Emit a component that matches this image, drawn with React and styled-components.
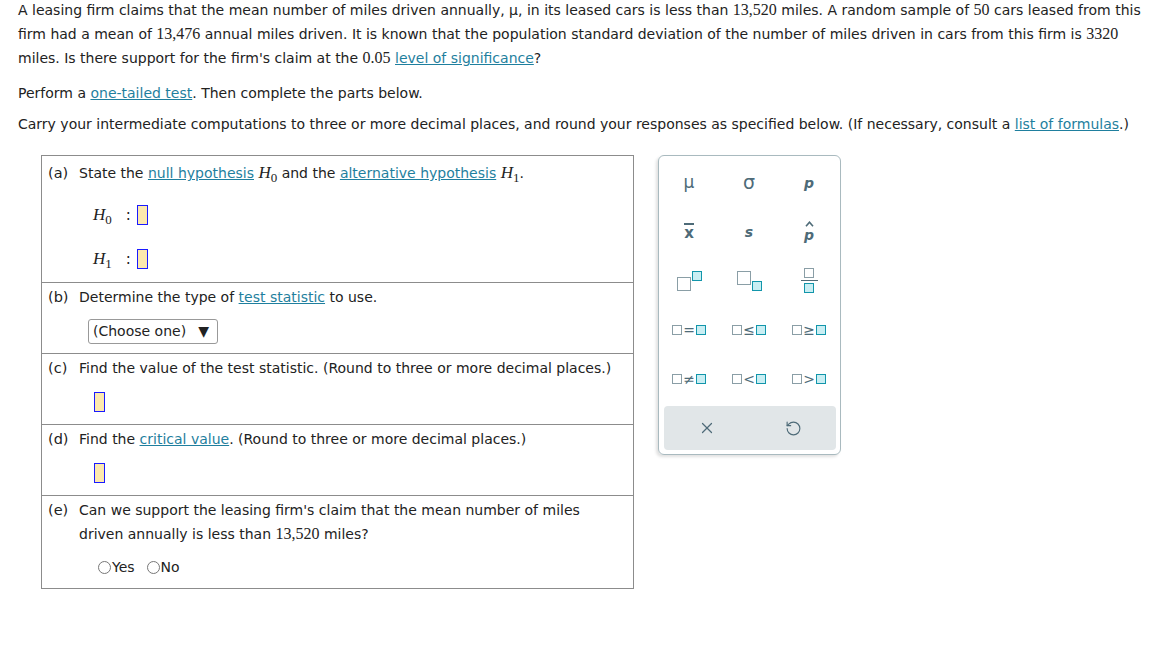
import styled, { createGlobalStyle } from 'styled-components'
import { X, RotateCcw } from 'lucide-react'

const GlobalStyle = createGlobalStyle`
  body {
    margin: 0;
    background: #fff;
    font-family: "DejaVu Sans", Verdana, sans-serif;
    font-size: 14px;
    color: #222;
  }
`

const Page = styled.div`
  padding: 0 0 0 18px;
`

const Para = styled.p`
  margin: ${(p) => p.$top}px 0 0;
  line-height: 24px;
  white-space: ${(p) => (p.$nowrap ? 'nowrap' : 'normal')};
`

const Num = styled.span`
  font-family: "Liberation Serif", "Times New Roman", serif;
  font-size: 16px;
`

const Link = styled.a`
  color: #1f7f9e;
  text-decoration: underline;
  cursor: pointer;
`

const MathH = styled.span`
  font-family: "Liberation Serif", "Times New Roman", serif;
  font-style: italic;
  font-size: 17px;
`

const Sub = styled.sub`
  font-family: "Liberation Serif", "Times New Roman", serif;
  font-style: normal;
  font-size: 13px;
  vertical-align: -4px;
  line-height: 0;
`

const Workspace = styled.div`
  display: flex;
  align-items: flex-start;
  gap: 24px;
  margin: 19px 0 0 23px;
`

const Table = styled.div`
  width: 593px;
  box-sizing: border-box;
  border: 1px solid #8c8c8c;
`

const Row = styled.div`
  display: grid;
  grid-template-columns: 31px 1fr;
  padding: ${(p) => p.$top}px 6px ${(p) => p.$bottom || 0}px;
  border-top: ${(p) => (p.$first ? 'none' : '1px solid #8c8c8c')};
`

const Label = styled.span`
  line-height: 24px;
  font-size: 14.5px;
`

const Body = styled.div`
  line-height: 24px;
`

const HypLine = styled.div`
  display: flex;
  align-items: center;
  height: 28px;
  margin: 16px 0 0 14px;
`

const Colon = styled.span`
  margin: 0 6px 0 14px;
  font-size: 15px;
`

const AnswerBox = styled.span`
  display: inline-block;
  width: 9px;
  height: 18px;
  background: #fde9ae;
  border: 1px solid #1a1aff;
`

const AnswerLine = styled.div`
  display: flex;
  align-items: center;
  gap: 12px;
  height: ${(p) => p.$h}px;
  padding-left: ${(p) => p.$indent}px;
`

const Select = styled.div`
  display: flex;
  align-items: center;
  gap: 12px;
  height: 25px;
  box-sizing: border-box;
  padding: 0 8px 0 4px;
  border: 1px solid #999;
  border-radius: 3px;
  font-size: 14px;
`

const Choice = styled.label`
  display: flex;
  align-items: center;
  gap: 1px;
`

const Radio = styled.span`
  display: inline-block;
  width: 11px;
  height: 11px;
  border: 1px solid #777;
  border-radius: 50%;
`

const Palette = styled.div`
  width: 183px;
  height: 300px;
  box-sizing: border-box;
  border: 1px solid #a9babf;
  border-radius: 6px;
  box-shadow: -2px 2px 3px rgba(0, 0, 0, 0.12);
  padding-top: 2px;
  display: flex;
  flex-direction: column;
`

const KeyGrid = styled.div`
  display: grid;
  grid-template-columns: repeat(3, 60px);
  grid-auto-rows: 49px;
`

const Key = styled.div`
  display: flex;
  align-items: center;
  justify-content: center;
  color: #4e6b78;
  font-family: "DejaVu Sans", sans-serif;
`

const Glyph = styled.span`
  font-size: ${(p) => p.$size}px;
  font-style: ${(p) => (p.$italic ? 'italic' : 'normal')};
  font-weight: ${(p) => (p.$bold ? 700 : 400)};
  line-height: 1;
`

const Bar = styled.span`
  display: inline-block;
  border-top: 2px solid #4e6b78;
  padding-top: 1px;
  font-weight: 700;
  font-size: 15px;
  line-height: 1;
`

const HatStack = styled.span`
  display: inline-flex;
  flex-direction: column;
  align-items: center;
  gap: 1px;
  font-weight: 700;
  font-style: italic;
  font-size: 14px;
  line-height: 1;
`

const Slot = styled.span`
  display: inline-block;
  box-sizing: border-box;
  width: ${(p) => p.$s}px;
  height: ${(p) => p.$s}px;
  border: 1.5px solid ${(p) => (p.$fill ? '#1296ab' : '#8a9ea6')};
  background: ${(p) => (p.$fill ? '#c9eef3' : '#fff')};
  align-self: ${(p) => p.$align || 'auto'};
`

const Script = styled.span`
  display: inline-flex;
  align-items: ${(p) => (p.$sup ? 'flex-start' : 'flex-end')};
  gap: 1px;
  height: 20px;
`

const Frac = styled.span`
  display: inline-flex;
  flex-direction: column;
  align-items: center;
  gap: 2px;
`

const FracLine = styled.span`
  width: 17px;
  border-top: 1.5px solid #4e6b78;
`

const Rel = styled.span`
  display: inline-flex;
  align-items: center;
  gap: 1px;
  font-size: 14px;
  line-height: 1;
`

const ActionBar = styled.div`
  margin: 3px 4px 0 5px;
  height: 44px;
  background: #e1e6e8;
  border-radius: 4px;
  display: grid;
  grid-template-columns: 1fr 1fr;
  align-items: center;
  justify-items: center;
  color: #4e6b78;
`

function H({ n }) {
  return (
    <MathH>
      H<Sub>{n}</Sub>
    </MathH>
  )
}

const relations = ['=', '≤', '≥', '≠', '<', '>']

export default function App() {
  return (
    <Page>
      <GlobalStyle />
      <Para $top={-2} $nowrap>
        A leasing firm claims that the mean number of miles driven annually, μ, in its leased cars is less than{' '}
        <Num>13,520</Num> miles. A random sample of <Num>50</Num> cars leased from this
        <br />
        firm had a mean of <Num>13,476</Num> annual miles driven. It is known that the population standard
        deviation of the number of miles driven in cars from this firm is <Num>3320</Num>
        <br />
        miles. Is there support for the firm's claim at the <Num>0.05</Num> <Link>level of significance</Link>?
      </Para>
      <Para $top={11}>
        Perform a <Link>one-tailed test</Link>. Then complete the parts below.
      </Para>
      <Para $top={7} $nowrap>
        Carry your intermediate computations to three or more decimal places, and round your responses as
        specified below. (If necessary, consult a <Link>list of formulas</Link>.)
      </Para>

      <Workspace>
        <Table>
          <Row $first $top={5} $bottom={9}>
            <Label>(a)</Label>
            <Body>
              State the <Link>null hypothesis</Link> <H n="0" /> and the <Link>alternative hypothesis</Link>{' '}
              <H n="1" />.
              <HypLine>
                <H n="0" />
                <Colon>:</Colon>
                <AnswerBox />
              </HypLine>
              <HypLine>
                <H n="1" />
                <Colon>:</Colon>
                <AnswerBox />
              </HypLine>
            </Body>
          </Row>
          <Row $top={2}>
            <Label>(b)</Label>
            <Body>
              Determine the type of <Link>test statistic</Link> to use.
              <AnswerLine $h={44} $indent={9}>
                <Select>
                  (Choose one) <span>▼</span>
                </Select>
              </AnswerLine>
            </Body>
          </Row>
          <Row $top={2}>
            <Label>(c)</Label>
            <Body>
              Find the value of the test statistic. (Round to three or more decimal places.)
              <AnswerLine $h={44} $indent={15}>
                <AnswerBox />
              </AnswerLine>
            </Body>
          </Row>
          <Row $top={2}>
            <Label>(d)</Label>
            <Body>
              Find the <Link>critical value</Link>. (Round to three or more decimal places.)
              <AnswerLine $h={44} $indent={15}>
                <AnswerBox />
              </AnswerLine>
            </Body>
          </Row>
          <Row $top={2}>
            <Label>(e)</Label>
            <Body>
              Can we support the leasing firm's claim that the mean number of miles
              <br />
              driven annually is less than <Num>13,520</Num> miles?
              <AnswerLine $h={42} $indent={19}>
                <Choice>
                  <Radio />
                  Yes
                </Choice>
                <Choice>
                  <Radio />
                  No
                </Choice>
              </AnswerLine>
            </Body>
          </Row>
        </Table>

        <Palette>
          <KeyGrid>
            <Key>
              <Glyph $size={17}>μ</Glyph>
            </Key>
            <Key>
              <Glyph $size={19}>σ</Glyph>
            </Key>
            <Key>
              <Glyph $size={14} $italic $bold>p</Glyph>
            </Key>
            <Key>
              <Bar>x</Bar>
            </Key>
            <Key>
              <Glyph $size={14} $italic $bold>s</Glyph>
            </Key>
            <Key>
              <HatStack>
                <svg width="9" height="6" viewBox="0 0 9 6">
                  <path d="M1 5.2 L4.5 1.2 L8 5.2" fill="none" stroke="#4e6b78" strokeWidth="1.6" />
                </svg>
                <span>p</span>
              </HatStack>
            </Key>
            <Key>
              <Script $sup>
                <Slot $s={14} $align="flex-end" />
                <Slot $s={10} $fill />
              </Script>
            </Key>
            <Key>
              <Script>
                <Slot $s={14} $align="flex-start" />
                <Slot $s={10} $fill />
              </Script>
            </Key>
            <Key>
              <Frac>
                <Slot $s={10} />
                <FracLine />
                <Slot $s={10} $fill />
              </Frac>
            </Key>
            {relations.map((r) => (
              <Key key={r}>
                <Rel>
                  <Slot $s={10} />
                  {r}
                  <Slot $s={10} $fill />
                </Rel>
              </Key>
            ))}
          </KeyGrid>
          <ActionBar>
            <X size={18} strokeWidth={1.6} />
            <RotateCcw size={17} strokeWidth={1.6} />
          </ActionBar>
        </Palette>
      </Workspace>
    </Page>
  )
}
